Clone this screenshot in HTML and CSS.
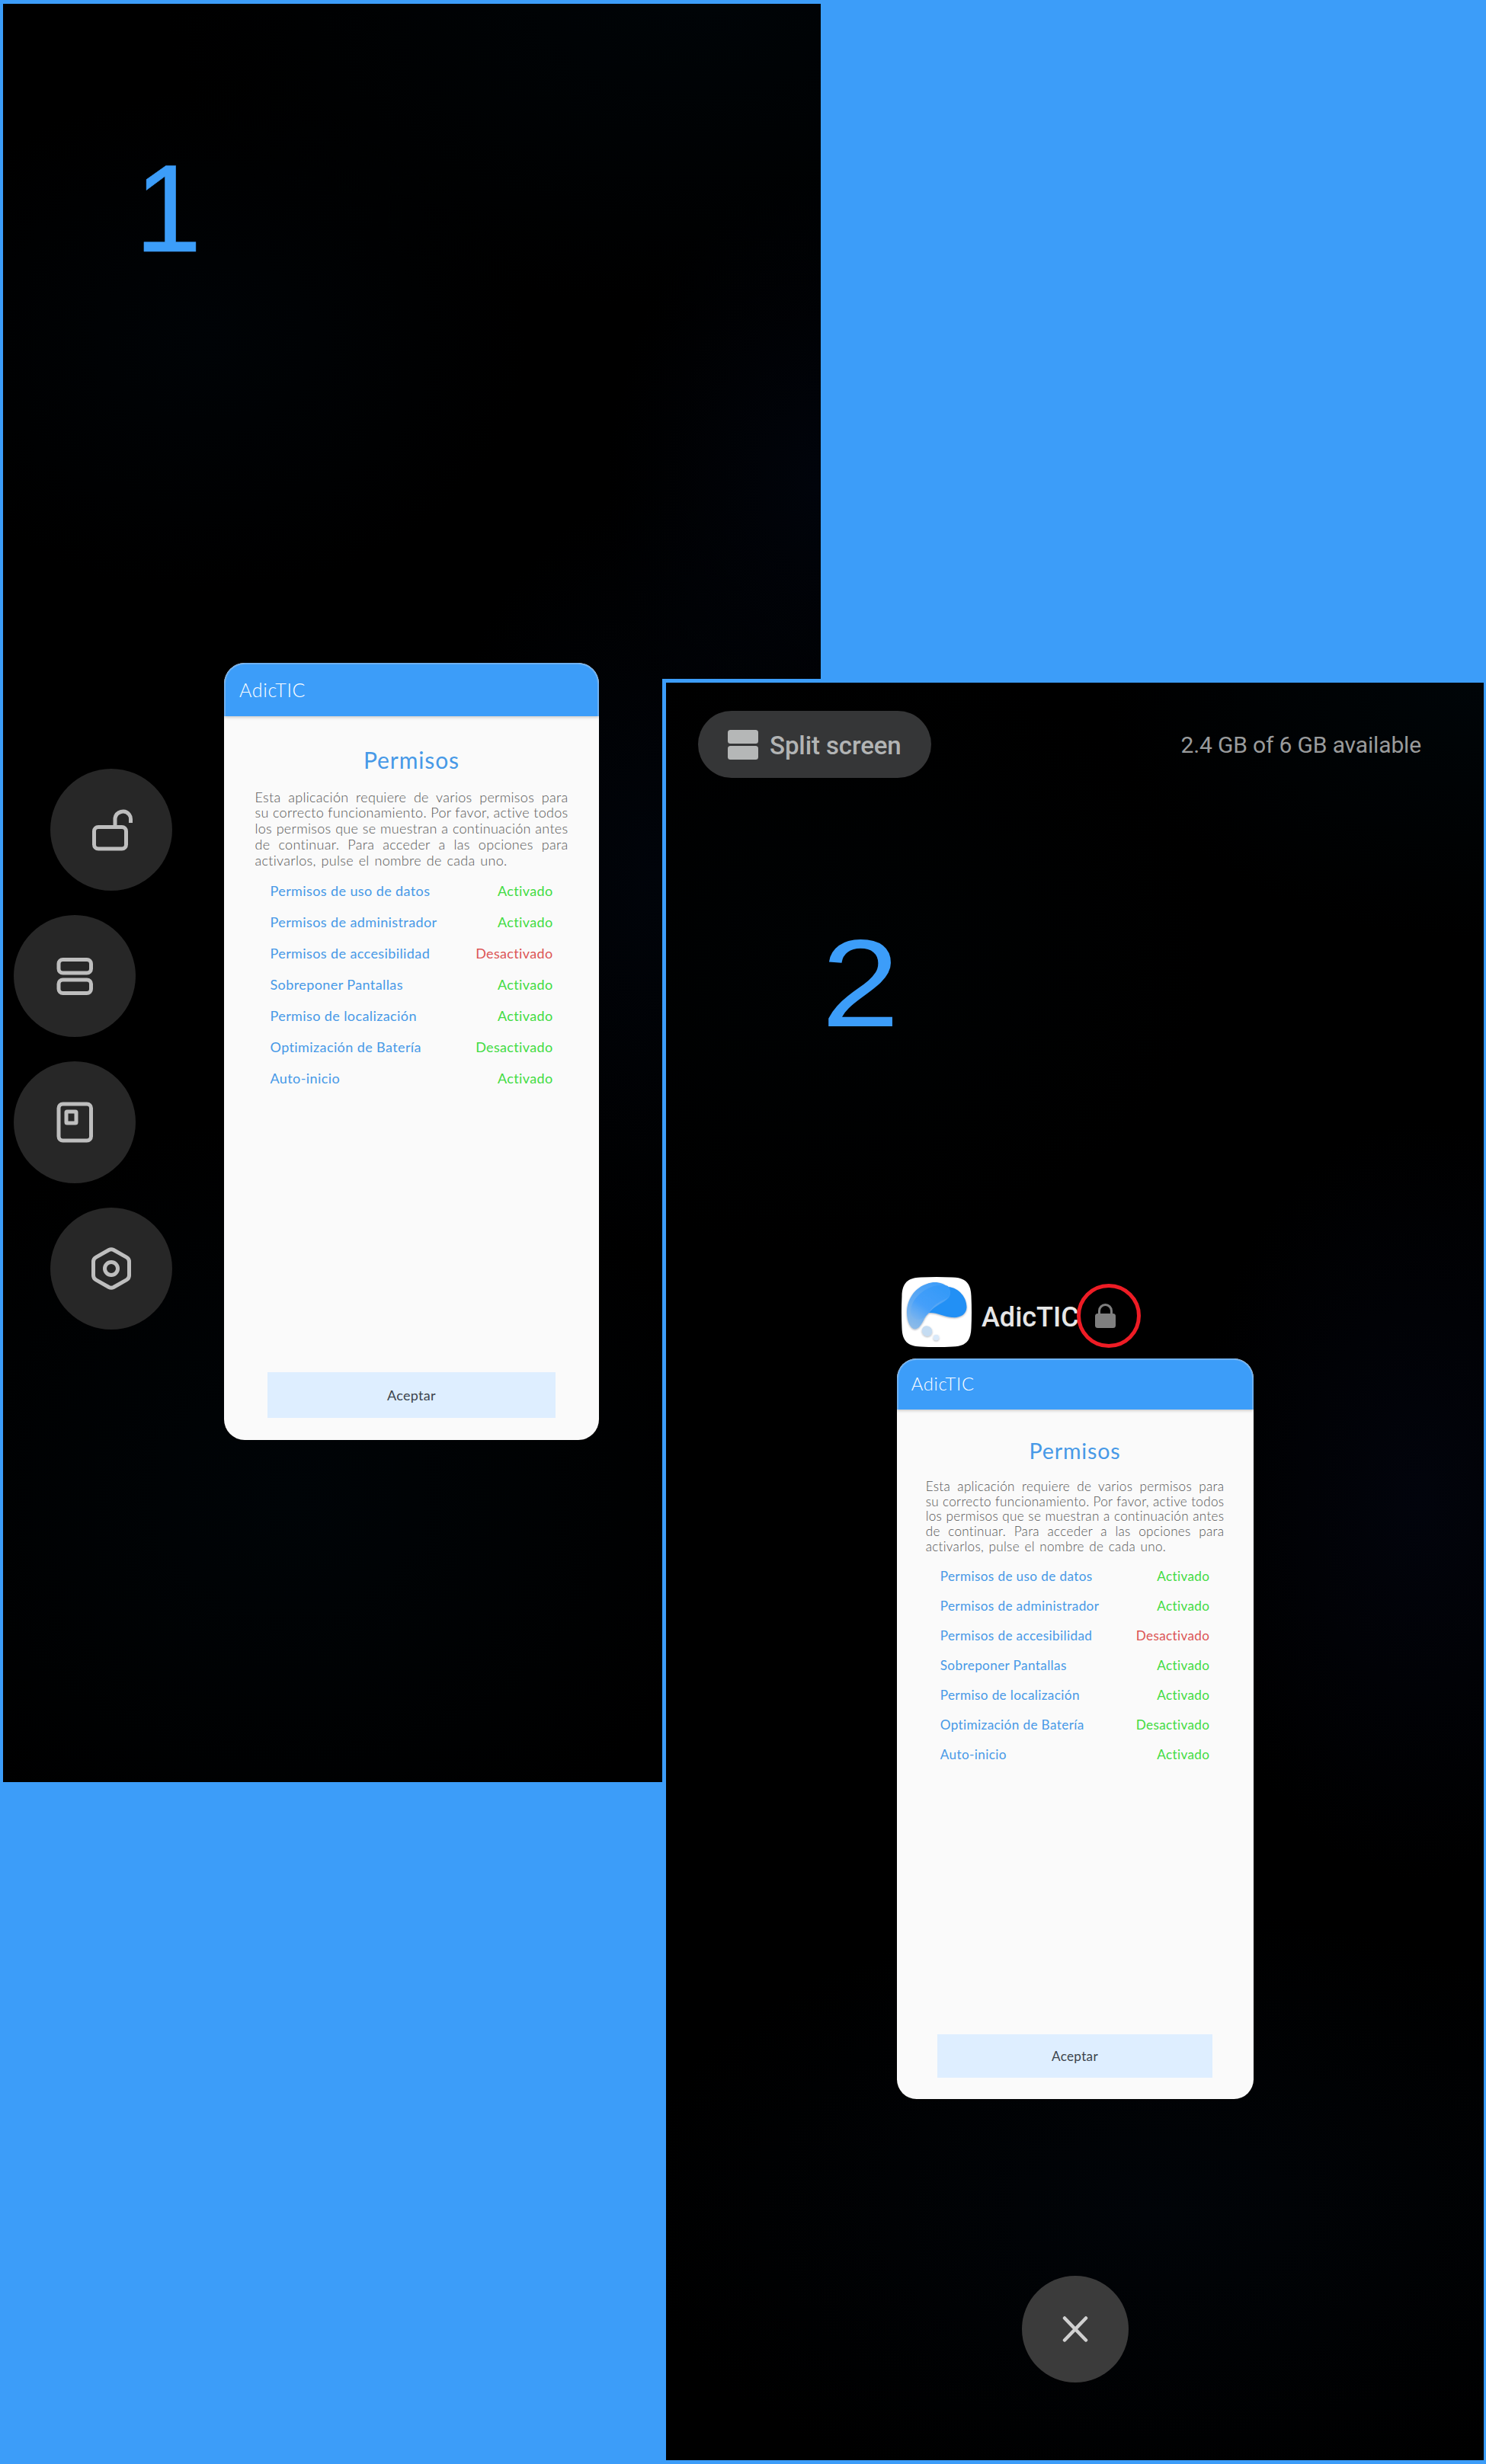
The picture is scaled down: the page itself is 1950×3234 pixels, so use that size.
FILE: index.html
```html
<!DOCTYPE html>
<html lang="es">
<head>
<meta charset="utf-8">
<title>AdicTIC</title>
<link rel="stylesheet" href="styles.css">
</head>
<body>
<main class="board">
  <section class="phone phone-one">
    <div class="step step-one">1</div>
    <div class="stage">
      <nav class="actions">
        <button class="action" aria-label="Bloquear"><svg viewBox="0 0 160 160"><rect x="57.5" y="76.5" width="42" height="28.500" rx="5.500"/><path d="M85 76V65a10.500 10.500 0 0 1 18.500-5q2 2.500 2 6v5"/></svg></button>
        <button class="action edge" aria-label="Pantalla dividida"><svg viewBox="0 0 160 160"><rect x="59" y="58.500" width="42.500" height="17.500" rx="5.500"/><rect x="59" y="85" width="42.500" height="17.500" rx="5.500"/></svg></button>
        <button class="action edge" aria-label="Ventana flotante"><svg viewBox="0 0 160 160"><rect x="59" y="56" width="42.500" height="48" rx="5.500"/><rect x="69" y="66" width="13" height="15" rx="1"/></svg></button>
        <button class="action" aria-label="Ajustes"><svg viewBox="0 0 160 160"><path d="M77 55.500q3-1.600 6 0l17 9.700q3.500 2 3.500 5.800v18q0 3.800-3.500 5.800l-17 9.700q-3 1.600-6 0l-17-9.700q-3.500-2-3.500-5.800V71q0-3.800 3.500-5.800z"/><circle cx="80" cy="80" r="8.500"/></svg></button>
      </nav>
      <article class="card">
        <header class="bar"><span>AdicTIC</span></header>
        <h1 class="title">Permisos</h1>
        <div class="intro">
          <p>Esta aplicación requiere de varios permisos para</p>
          <p>su correcto funcionamiento. Por favor, active todos</p>
          <p>los permisos que se muestran a continuación antes</p>
          <p>de continuar. Para acceder a las opciones para</p>
          <p class="last">activarlos, pulse el nombre de cada uno.</p>
        </div>
        <ul class="list">
          <li><a>Permisos de uso de datos</a><span class="on">Activado</span></li>
          <li><a>Permisos de administrador</a><span class="on">Activado</span></li>
          <li><a>Permisos de accesibilidad</a><span class="off">Desactivado</span></li>
          <li><a>Sobreponer Pantallas</a><span class="on">Activado</span></li>
          <li><a>Permiso de localización</a><span class="on">Activado</span></li>
          <li><a>Optimización de Batería</a><span class="on">Desactivado</span></li>
          <li><a>Auto-inicio</a><span class="on">Activado</span></li>
        </ul>
        <button class="accept">Aceptar</button>
      </article>
    </div>
  </section>

  <section class="phone phone-two">
    <div class="topbar">
      <button class="pill"><svg viewBox="0 0 40 39"><rect width="40" height="18" rx="3.500"/><rect y="21" width="40" height="18" rx="3.500"/></svg><span>Split screen</span></button>
      <span class="memory">2.4 GB of 6 GB available</span>
    </div>
    <div class="step step-two">2</div>
    <div class="app">
      <svg class="logo" viewBox="0 0 92 92">
        <defs>
          <linearGradient id="tail" x1=".7" y1="0" x2=".2" y2="1"><stop offset="0" stop-color="#3f9ef9"/><stop offset=".55" stop-color="#60aaf3"/><stop offset="1" stop-color="#8dbbe8"/></linearGradient>
          <linearGradient id="core" x1=".8" y1=".1" x2=".1" y2="1"><stop offset="0" stop-color="#359af8"/><stop offset=".6" stop-color="#459ffa"/><stop offset="1" stop-color="#7ab4ee"/></linearGradient>
          <filter id="soft" x="-20%" y="-20%" width="140%" height="150%"><feDropShadow dx="0" dy="1" stdDeviation=".8" flood-color="#234" flood-opacity=".4"/></filter>
        </defs>
        <path fill="#fff" d="M25 .5Q46-.5 67 .5C84 1 91 8 91.500 25Q92.500 46 91.500 67C91 84 84 91 67 91.500Q46 92.500 25 91.500C8 91 1 84 .5 67Q-.5 46 .5 25C1 8 8 1 25 .5z"/>
        <g filter="url(#soft)">
          <path fill="#2490f5" d="M61 13C76 14 86 28 85.500 40C85 50 76 54 66 53C55 52 46 46 36 47L34 36z"/>
          <path fill="url(#tail)" d="M62 14C56 8 46 6 39 7.500C20 11 7 27 7 47C7 59 12 68.500 18 68.500C27 67 29 52 37 46C44 37 56 34 62 27Q66 20 62 14z"/>
          <path fill="url(#core)" d="M61 12C64 17 65 24 61 27C53 32 44 33 36 47C31 52 27 56 21 56C14 55 11 48 12.500 42C14 28 31 13 48 11Q56 10 61 12z"/>
          <ellipse cx="33.500" cy="71" rx="7" ry="6.500" transform="rotate(40 33.500 71)" fill="#c5dcf2"/>
          <circle cx="45.500" cy="79.500" r="3.700" fill="#d9e9fa"/>
        </g>
      </svg>
      <span class="app-name">AdicTIC</span>
      <span class="lock"><svg viewBox="0 0 27 32"><path fill="none" stroke="#7f7f7f" stroke-width="3" d="M5.500 14V9.500a8 8 0 0 1 16 0V14"/><rect y="13" width="27" height="19" rx="3.500" fill="#7f7f7f"/></svg><i class="ring"></i></span>
    </div>
    <article class="card small">
      <header class="bar"><span>AdicTIC</span></header>
      <h1 class="title">Permisos</h1>
      <div class="intro">
        <p>Esta aplicación requiere de varios permisos para</p>
        <p>su correcto funcionamiento. Por favor, active todos</p>
        <p>los permisos que se muestran a continuación antes</p>
        <p>de continuar. Para acceder a las opciones para</p>
        <p class="last">activarlos, pulse el nombre de cada uno.</p>
      </div>
      <ul class="list">
        <li><a>Permisos de uso de datos</a><span class="on">Activado</span></li>
        <li><a>Permisos de administrador</a><span class="on">Activado</span></li>
        <li><a>Permisos de accesibilidad</a><span class="off">Desactivado</span></li>
        <li><a>Sobreponer Pantallas</a><span class="on">Activado</span></li>
        <li><a>Permiso de localización</a><span class="on">Activado</span></li>
        <li><a>Optimización de Batería</a><span class="on">Desactivado</span></li>
        <li><a>Auto-inicio</a><span class="on">Activado</span></li>
      </ul>
      <button class="accept">Aceptar</button>
    </article>
    <button class="close" aria-label="Close"><svg viewBox="0 0 140 140"><path d="M56 55.500l28 29M84 55.500l-28 29"/></svg></button>
  </section>
</main>
</body>
</html>
```
FILE: styles.css
```css
* { box-sizing: border-box; }
body { margin: 0; background: #3c9df9; }
button { border: 0; padding: 0; font: inherit; }
svg { display: block; }
h1, p, ul { margin: 0; padding: 0; }

.board { position: relative; width: 1950px; height: 3234px; overflow: hidden; padding: 5px 4px; background: #3c9df9; }

.phone { width: 1073px; height: 2334px; overflow: hidden; }
.phone-one {
  background:
    radial-gradient(ellipse 280px 400px at 100% 27%, #01040b, transparent),
    radial-gradient(ellipse 420px 330px at 25% 19%, #000306, transparent),
    radial-gradient(ellipse 700px 400px at 85% 0, #000407, transparent),
    radial-gradient(ellipse 300px 500px at 80% 49%, #01040a, transparent),
    radial-gradient(ellipse 600px 500px at 35% 84%, #000407, transparent),
    #000;
}
.phone-two {
  position: absolute; left: 869px; top: 891px; width: 1083px; height: 2343px;
  border: 5px solid #3c9df9;
  background:
    radial-gradient(ellipse 500px 340px at 100% 0, #000508, transparent),
    radial-gradient(ellipse 300px 500px at 92% 46%, #02040c, transparent),
    radial-gradient(ellipse 500px 400px at 20% 15%, #000203, transparent),
    radial-gradient(ellipse 700px 400px at 60% 86%, #010408, transparent),
    #000;
}

.step { font: 164px/1 "Liberation Sans", sans-serif; color: #3c9df9; transform-origin: 0 0; }
.step-one { margin-left: 173px; width: 100px; padding-top: 187px; height: 865px; transform: scaleX(.96); -webkit-text-stroke: .6px #3c9df9; }

.stage { display: flex; align-items: flex-start; }
.actions { width: 290px; padding-top: 139px; display: flex; flex-direction: column; gap: 32px; }
.action { width: 160px; height: 160px; margin-left: 62px; border-radius: 50%; background: #272727; }
.action.edge { margin-left: 14px; }
.action svg { width: 160px; fill: none; stroke: #bebebe; stroke-width: 5; }

.card {
  --u: 1px;
  width: calc(492 * var(--u)); height: calc(1020 * var(--u));
  display: flex; flex-direction: column; align-items: center;
  background: #fafafa; border-radius: calc(27 * var(--u)); overflow: hidden;
  font-family: Lato, sans-serif;
}
.card.small { --u: .953px; margin: 15px auto 0; width: 468px; }
.bar {
  width: 100%; height: calc(70 * var(--u)); flex: none;
  padding: calc(16 * var(--u)) 0 0 calc(18 * var(--u));
  background: #3c9df9; color: #fff; border: solid #6eb1f2; border-width: 2px 2px 0;
  border-radius: calc(27 * var(--u)) calc(27 * var(--u)) 0 0;
  box-shadow: 0 1px 4px rgba(0,0,0,.25);
  font-size: calc(25 * var(--u)); line-height: calc(34 * var(--u)); font-weight: 300;
  letter-spacing: calc(.7 * var(--u));
}
.title {
  margin-top: calc(38 * var(--u)); height: calc(40 * var(--u));
  font-size: calc(30 * var(--u)); line-height: calc(38 * var(--u)); font-weight: 400; color: #4799e7;
  letter-spacing: calc(.9 * var(--u));
}
.intro { width: calc(411 * var(--u)); margin-top: calc(17.500 * var(--u)); font-size: calc(18 * var(--u)); color: #555; font-weight: 300; }
.intro p { line-height: calc(20.85 * var(--u)); height: calc(20.85 * var(--u)); white-space: nowrap; text-align-last: justify; letter-spacing: calc(.3 * var(--u)); }
.intro .last { width: calc(331 * var(--u)); }
.list { width: calc(371 * var(--u)); margin-top: calc(9.500 * var(--u)); list-style: none; font-size: calc(18 * var(--u)); }
.list li { display: flex; justify-content: space-between; height: calc(41 * var(--u)); line-height: calc(41 * var(--u)); }
.list a { color: #4799e7; letter-spacing: calc(.4 * var(--u)); }
.list span { letter-spacing: calc(.35 * var(--u)); }
.on { color: #42dc42; }
.off { color: #dc5555; }
.accept {
  width: calc(378 * var(--u)); height: calc(60 * var(--u)); margin: auto 0 calc(29.500 * var(--u));
  background: #deeeff; color: #3c444c; font-size: calc(18 * var(--u)); letter-spacing: calc(.3 * var(--u));
}

.topbar { display: flex; align-items: center; padding: 37px 82px 0 42px; justify-content: space-between; font-family: Roboto, sans-serif; }
.pill { display: flex; align-items: center; gap: 15px; width: 306px; height: 88px; padding-left: 39px; border-radius: 44px; background: #353637; color: #b2b4b4; font-size: 33px; font-weight: 500; }
.pill svg { width: 40px; height: 39px; fill: #b5b7b7; }
.pill span { padding-top: 2px; white-space: nowrap; letter-spacing: -.1px; }
.memory { color: #999b9c; font-size: 30px; letter-spacing: -.15px; }
.step-two { margin-left: 204px; width: 100px; padding-top: 188px; height: 655px; transform: scaleX(1.12); }

.app { display: flex; height: 92px; padding-left: 309px; font-family: Roboto, sans-serif; }
.logo { width: 92px; height: 92px; }
.app-name { margin-left: 13px; width: 128px; padding-top: 32px; font-size: 36px; line-height: 42px; font-weight: 500; color: #e6e6e6; white-space: nowrap; }
.lock { position: relative; margin-left: 21px; padding-top: 35px; }
.lock svg { width: 27px; height: 32px; }
.ring { position: absolute; left: -24px; top: 9px; width: 84px; height: 84px; border: 5px solid #ee1c25; border-radius: 50%; }
.close { display: block; width: 140px; height: 140px; margin: 232px auto 0; border-radius: 50%; background: #3b3b3b; }
.close svg { width: 140px; fill: none; stroke: #d0d0d0; stroke-width: 4.500; stroke-linecap: round; }
```
